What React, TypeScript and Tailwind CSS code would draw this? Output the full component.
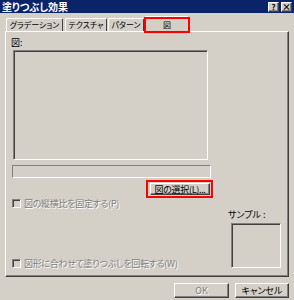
const raised =
  'border border-t-white border-l-white border-r-[#404040] border-b-[#404040] shadow-[inset_-1px_-1px_0_#808080]';
const sunken =
  'border border-t-[#808080] border-l-[#808080] border-r-white border-b-white shadow-[inset_1px_1px_0_#404040]';
const disabledText = 'text-[#808080] [text-shadow:1px_1px_0_#fff]';

const Tab = ({ label, w, ml, active }: { label: string; w: string; ml: string; active?: boolean }) => (
  <div
    className={`${w} ${ml} flex items-center justify-center border-t border-l border-r border-t-white border-l-white border-r-[#404040] rounded-t-[2px] bg-[#d4d0c8] ${
      active ? 'h-[16px] -mb-px relative z-10' : 'h-[13px]'
    }`}
  >
    <span className="text-[8px] leading-none text-black whitespace-nowrap">{label}</span>
  </div>
);

const CheckRow = ({ label }: { label: string }) => (
  <div className="flex items-center h-[12px]">
    <div className={`w-[9px] h-[9px] ml-[1px] ${sunken} bg-[#d4d0c8]`} />
    <span className={`ml-[3px] text-[9px] leading-none whitespace-nowrap tracking-[-0.3px] ${disabledText}`}>{label}</span>
  </div>
);

const App = () => {
  return (
    <div className="w-[294px] h-[300px] bg-[#d4d0c8] flex flex-col overflow-hidden font-['Noto_Sans_CJK_JP',sans-serif] [font-feature-settings:'palt']">
      {/* title bar */}
      <div className="h-[13px] bg-[#0a246a] flex items-center justify-between pl-[2px] pr-[2px]">
        <span className="text-white font-bold text-[10px] leading-none">塗りつぶし効果</span>
        <div className="flex gap-[2px]">
          <div className={`w-[11px] h-[10px] bg-[#d4d0c8] ${raised} flex items-center justify-center text-[8px] font-bold leading-none text-black`}>?</div>
          <div className={`w-[11px] h-[10px] bg-[#d4d0c8] ${raised} flex items-center justify-center text-[9px] font-bold leading-none text-black`}>×</div>
        </div>
      </div>

      {/* tabs */}
      <div className="mt-[3px] h-[15px] flex items-end relative">
        <Tab label="グラデーション" w="w-[57px]" ml="ml-[6px]" />
        <Tab label="テクスチャ" w="w-[42px]" ml="ml-[2px]" />
        <Tab label="パターン" w="w-[36px]" ml="ml-[1px]" />
        <div className="relative ml-[1px]">
          <Tab label="図" w="w-[44px]" ml="ml-0" active />
          <div className="absolute -left-[1px] -right-[1px] top-[1px] -bottom-[2px] border-2 border-[#ff0000] z-20" />
        </div>
      </div>

      {/* panel */}
      <div className="mx-[5px] w-[284px] h-[246px] border border-t-white border-l-white border-r-[#404040] border-b-[#404040] shadow-[inset_-1px_-1px_0_#808080] flex flex-col pl-[5px] pt-[4px]">
        <div className="h-[12px] flex items-center text-[9px] leading-none text-black">図:</div>
        <div className={`mt-[2px] ml-[2px] w-[195px] h-[110px] ${sunken}`} />
        <div className={`mt-[5px] ml-[1px] w-[199px] h-[13px] ${sunken} shadow-none bg-[#d4d0c8]`} />
        <div className="mt-[5px] ml-[139px] relative w-[60px]">
          <div className={`h-[12px] ${raised} bg-[#d4d0c8] flex items-center justify-center text-[9px] leading-none text-black whitespace-nowrap tracking-[-0.3px]`}>
            図の選択(L)...
          </div>
          <div className="absolute -left-[4px] -right-[3px] -top-[3px] -bottom-[3px] border-2 border-[#ff0000]" />
        </div>

        <div className="mt-[2px] flex">
          <div className="w-[217px] flex flex-col">
            <CheckRow label="図の縦横比を固定する(P)" />
            <div className="mt-[48px]">
              <CheckRow label="図形に合わせて塗りつぶしを回転する(W)" />
            </div>
          </div>
          <div className="flex flex-col mt-[13px]">
            <span className="h-[10px] text-[9px] leading-[10px] text-black whitespace-nowrap">サンプル :</span>
            <div className={`mt-[3px] ml-[3px] w-[50px] h-[45px] ${sunken}`} />
          </div>
        </div>
      </div>

      {/* footer buttons */}
      <div className="mt-[6px] flex justify-end gap-[6px] pr-[5px]">
        <div className={`w-[55px] h-[15px] ${raised} flex items-center justify-center text-[9px] leading-none ${disabledText}`}>OK</div>
        <div className={`w-[54px] h-[15px] ${raised} flex items-center justify-center text-[9px] leading-none text-black`}>キャンセル</div>
      </div>
    </div>
  );
};

export default App;
